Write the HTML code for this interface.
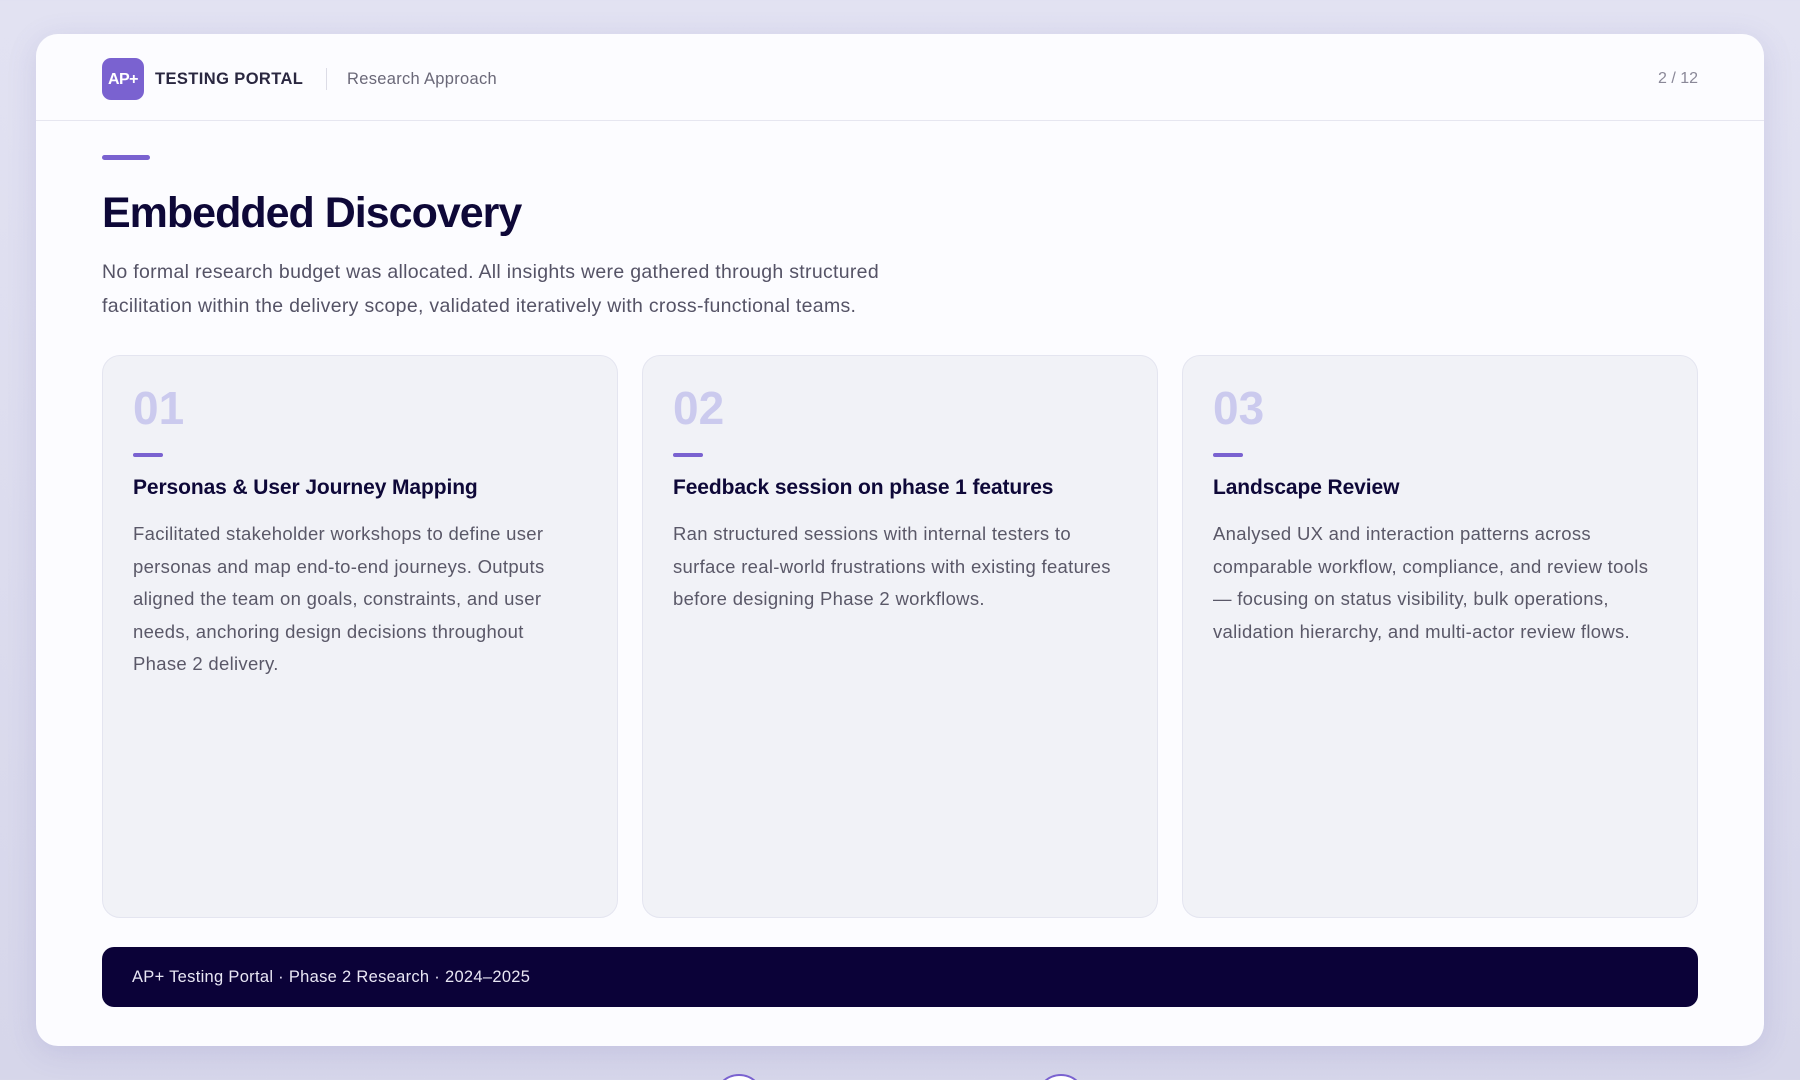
<!DOCTYPE html>
<html style="overflow:hidden;width:1800px;height:1080px"><head><meta charset="utf-8"><style>
*{margin:0;padding:0;box-sizing:border-box}
body{width:1800px;height:1080px;overflow:hidden;background:linear-gradient(180deg,#e2e2f2,#d6d6ea);font-family:"Liberation Sans",sans-serif;position:relative}
.card{position:absolute;left:36px;top:34px;width:1728px;height:1012px;background:#fcfcff;border-radius:22px;box-shadow:0 6px 30px rgba(90,80,170,.15)}
.hdr{position:absolute;left:0;top:0;width:100%;height:87px;border-bottom:1px solid #e6e6f0}
.logo{position:absolute;left:66px;top:24px;width:42px;height:42px;border-radius:9px;background:#7a62d0;color:#fff;font-weight:bold;font-size:16px;line-height:44px;text-align:center;letter-spacing:-.5px}
.brand{position:absolute;left:119px;top:36px;font-size:16.5px;font-weight:bold;color:#2a2740;letter-spacing:.4px}
.sep{position:absolute;left:290px;top:34px;width:1px;height:22px;background:#dcdce6}
.sub{position:absolute;left:311px;top:36px;font-size:16.5px;color:#6a6878;letter-spacing:.3px}
.pg{position:absolute;right:66px;top:36px;font-size:16px;color:#8a8898}
.acc{position:absolute;left:66px;top:121px;width:48px;height:5px;border-radius:3px;background:#7a62d0}
h1{position:absolute;left:66px;top:155px;font-size:43px;font-weight:bold;color:#0e0838;letter-spacing:-1px}
.lead{position:absolute;left:66px;top:221px;font-size:19.5px;line-height:34px;color:#555366;letter-spacing:.3px;white-space:nowrap}
.c{position:absolute;top:321px;width:516px;height:563px;background:#f1f2f7;border:1px solid #e4e5f0;border-radius:18px}
.n{position:absolute;left:30px;top:25px;font-size:46px;font-weight:bold;color:#cbcaee}
.b{position:absolute;left:30px;top:97px;width:30px;height:4px;border-radius:2px;background:#7a62d0}
.t{position:absolute;left:30px;top:120px;font-size:21px;font-weight:bold;color:#0e0838;letter-spacing:-.1px;white-space:nowrap}
.d{position:absolute;left:30px;top:162px;font-size:18.5px;line-height:32.6px;color:#5a5868;letter-spacing:.3px;white-space:nowrap}
.foot{position:absolute;left:66px;top:913px;width:1596px;height:60px;border-radius:12px;background:#0b0238;color:#e8e6f4;font-size:16.5px;line-height:60px;padding-left:30px;letter-spacing:.3px}
.circ{position:absolute;top:1074px;width:50px;height:50px;border-radius:50%;border:2px solid #7a62d0;background:#fff}
</style></head><body>
<div class="card">
<div class="hdr"><div class="logo">AP+</div><div class="brand">TESTING PORTAL</div><div class="sep"></div><div class="sub">Research Approach</div><div class="pg">2 / 12</div></div>
<div class="acc"></div>
<h1>Embedded Discovery</h1>
<div class="lead">No formal research budget was allocated. All insights were gathered through structured<br>facilitation within the delivery scope, validated iteratively with cross-functional teams.</div>
<div class="c" style="left:66px"><div class="n">01</div><div class="b"></div><div class="t">Personas &amp; User Journey Mapping</div><div class="d">Facilitated stakeholder workshops to define user<br>personas and map end-to-end journeys. Outputs<br>aligned the team on goals, constraints, and user<br>needs, anchoring design decisions throughout<br>Phase 2 delivery.</div></div>
<div class="c" style="left:606px"><div class="n">02</div><div class="b"></div><div class="t">Feedback session on phase 1 features</div><div class="d">Ran structured sessions with internal testers to<br>surface real-world frustrations with existing features<br>before designing Phase 2 workflows.</div></div>
<div class="c" style="left:1146px"><div class="n">03</div><div class="b"></div><div class="t">Landscape Review</div><div class="d">Analysed UX and interaction patterns across<br>comparable workflow, compliance, and review tools<br>— focusing on status visibility, bulk operations,<br>validation hierarchy, and multi-actor review flows.</div></div>
<div class="foot">AP+ Testing Portal · Phase 2 Research · 2024–2025</div>
</div>
<div class="circ" style="left:714px"></div>
<div class="circ" style="left:1036px"></div>
</body></html>
